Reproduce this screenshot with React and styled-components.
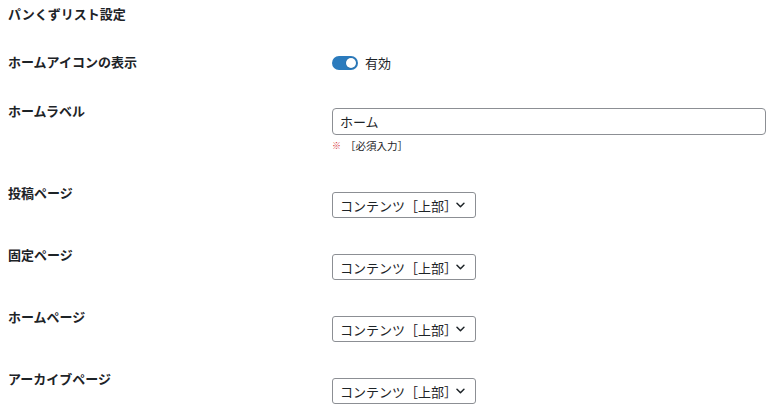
import styled, { createGlobalStyle } from "styled-components";

const GlobalStyle = createGlobalStyle`
  html, body {
    margin: 0;
    padding: 0;
    background: #fff;
  }
  body {
    font-family: "Noto Sans CJK JP", "Noto Sans", sans-serif;
    color: #1d2327;
  }
`;

const Page = styled.div`
  padding: 5px 9px 0 8px;
`;

const Title = styled.h2`
  margin: 0 0 31px;
  font-size: 13px;
  line-height: 17px;
  font-weight: 700;
`;

const Row = styled.div`
  display: grid;
  grid-template-columns: 324px 1fr;
  align-items: start;
  padding-bottom: ${(p) => p.$bottom}px;
`;

const Label = styled.div`
  font-size: 13px;
  line-height: 17px;
  font-weight: 700;
`;

const Field = styled.div`
  padding-top: ${(p) => p.$offset}px;
  min-width: 0;
`;

const ToggleWrap = styled.label`
  display: flex;
  align-items: center;
  gap: 7px;
  font-size: 13px;
  line-height: 14px;
`;

const Track = styled.span`
  position: relative;
  width: 26px;
  height: 14px;
  border-radius: 7px;
  background: #2b7bbd;
  flex: none;
`;

const Knob = styled.span`
  position: absolute;
  top: 2px;
  right: 2px;
  width: 10px;
  height: 10px;
  border-radius: 50%;
  background: #fff;
  box-shadow: 0 0 0 0.5px rgba(0, 0, 0, 0.15);
`;

const TextInput = styled.div`
  box-sizing: border-box;
  height: 27px;
  border: 1px solid #8c8f94;
  border-radius: 4px;
  padding: 0 7px;
  display: flex;
  align-items: center;
  font-size: 13px;
`;

const Note = styled.div`
  margin-top: 3px;
  display: flex;
  align-items: center;
  gap: 4px;
  font-size: 10.5px;
  line-height: 15px;
  color: #1d2327;
`;

const Mark = styled.span`
  color: #d63638;
  font-size: 9px;
  font-weight: 700;
`;

const Select = styled.div`
  box-sizing: border-box;
  width: 144px;
  height: 26px;
  border: 1px solid #8c8f94;
  border-radius: 3px;
  padding: 0 10px 0 7px;
  display: flex;
  align-items: center;
  justify-content: space-between;
  font-size: 13px;
`;

const Chevron = () => (
  <svg width="9" height="6" viewBox="0 0 9 6" fill="none">
    <path d="M1 1.2l3.5 3.5 3.5-3.5" stroke="#1d2327" strokeWidth="1.5" strokeLinecap="round" strokeLinejoin="round" />
  </svg>
);

const pages = ["投稿ページ", "固定ページ", "ホームページ", "アーカイブページ"];

export default function App() {
  return (
    <>
      <GlobalStyle />
      <Page>
        <Title>パンくずリスト設定</Title>
        <Row $bottom={32}>
          <Label>ホームアイコンの表示</Label>
          <Field $offset={3}>
            <ToggleWrap>
              <Track>
                <Knob />
              </Track>
              有効
            </ToggleWrap>
          </Field>
        </Row>
        <Row $bottom={31}>
          <Label>ホームラベル</Label>
          <Field $offset={6}>
            <TextInput>ホーム</TextInput>
            <Note>
              <Mark>※</Mark>［必須入力］
            </Note>
          </Field>
        </Row>
        {pages.map((name) => (
          <Row key={name} $bottom={28}>
            <Label>{name}</Label>
            <Field $offset={8}>
              <Select>
                コンテンツ［上部］
                <Chevron />
              </Select>
            </Field>
          </Row>
        ))}
      </Page>
    </>
  );
}
